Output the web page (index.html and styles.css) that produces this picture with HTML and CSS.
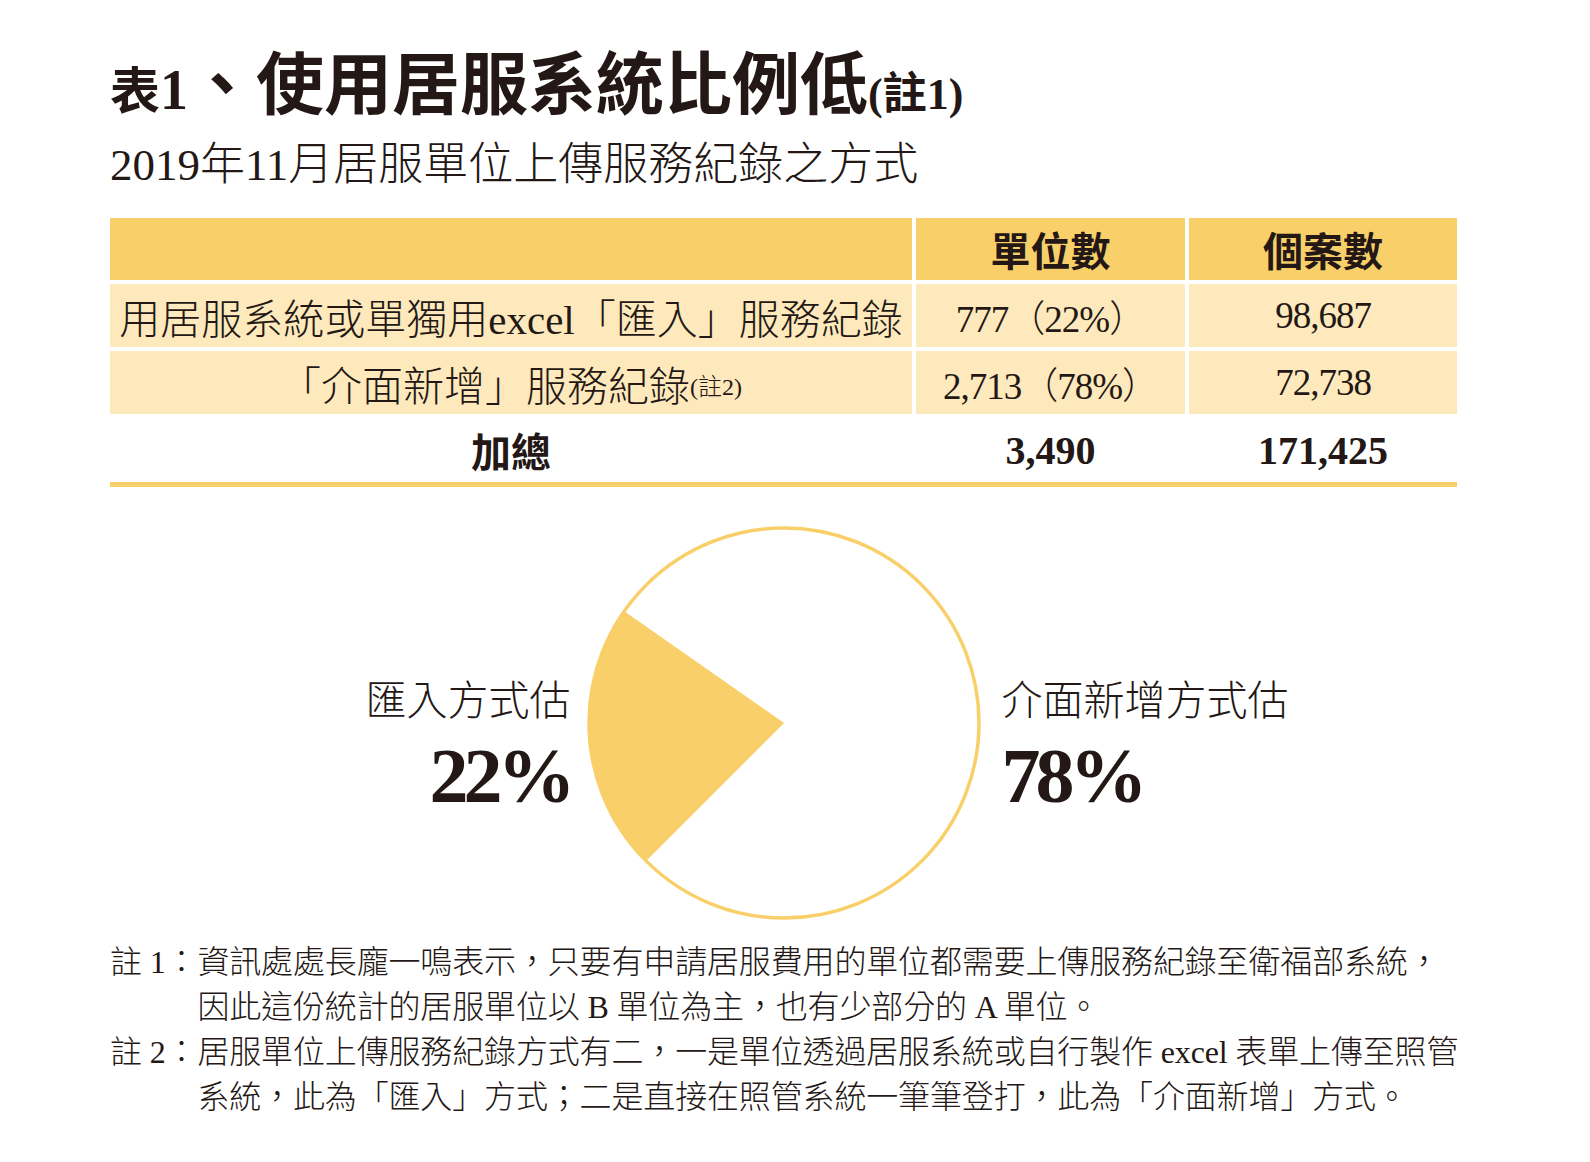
FILE: index.html
```html
<!DOCTYPE html>
<html lang="zh-Hant">
<head>
<meta charset="utf-8">
<title>表1、使用居服系統比例低</title>
<link rel="stylesheet" href="styles.css">
</head>
<body>
<div class="page">
  <h1 class="title"><span class="t-small">表<span class="t-num">1</span></span><span class="t-big">、使用居服系統比例低</span><span class="t-note">(註1)</span></h1>
  <p class="subtitle">2019年11月居服單位上傳服務紀錄之方式</p>

  <div class="data">
    <div class="cell head"></div>
    <div class="cell head">單位數</div>
    <div class="cell head">個案數</div>

    <div class="cell row">用居服系統或單獨用excel「匯入」服務紀錄</div>
    <div class="cell row num">777（22%）</div>
    <div class="cell row num">98,687</div>

    <div class="cell row">「介面新增」服務紀錄<span class="sup-note">(註2)</span></div>
    <div class="cell row num">2,713（78%）</div>
    <div class="cell row num">72,738</div>

    <div class="cell total">加總</div>
    <div class="cell total tnum">3,490</div>
    <div class="cell total tnum">171,425</div>
  </div>

  <div class="chart">
    <div class="label left">
      <div class="label-name">匯入方式估</div>
      <div class="label-pct">22%</div>
    </div>
    <svg class="pie" width="400" height="400" viewBox="0 0 400 400" aria-hidden="true">
      <circle cx="200" cy="200" r="195" fill="#ffffff" stroke="#f9cf69" stroke-width="3.5"/>
      <path d="M200,200 L40.3,88.2 A195,195 0 0,0 62.1,337.9 Z" fill="#f9cf69"/>
    </svg>
    <div class="label right">
      <div class="label-name">介面新增方式估</div>
      <div class="label-pct">78%</div>
    </div>
  </div>

  <div class="notes">
    <div class="note">
      <span class="note-tag">註 1：</span>
      <div class="note-body">
        <span class="note-line">資訊處處長龐一鳴表示，只要有申請居服費用的單位都需要上傳服務紀錄至衛福部系統，</span>
        <span class="note-line">因此這份統計的居服單位以 B 單位為主，也有少部分的 A 單位。</span>
      </div>
    </div>
    <div class="note">
      <span class="note-tag">註 2：</span>
      <div class="note-body">
        <span class="note-line">居服單位上傳服務紀錄方式有二，一是單位透過居服系統或自行製作 excel 表單上傳至照管</span>
        <span class="note-line">系統，此為「匯入」方式；二是直接在照管系統一筆筆登打，此為「介面新增」方式。</span>
      </div>
    </div>
  </div>
</div>
</body>
</html>
```

FILE: styles.css
```css
html, body {
  margin: 0;
  padding: 0;
  background: #ffffff;
}

body {
  color: #231815;
  font-family: "Liberation Serif", "Noto Sans CJK TC", serif;
}

.page {
  width: 1347px;
  padding: 46px 0 0 110px;
}

.title {
  margin: 0;
  font-weight: 700;
  line-height: 80px;
  height: 80px;
  white-space: nowrap;
}

.t-small {
  font-size: 50px;
}

.t-num {
  font-size: 56px;
}

.t-big {
  font-size: 68px;
}

.t-note {
  font-size: 44px;
}

.subtitle {
  margin: 11px 0 0 0;
  font-size: 45px;
  line-height: 56px;
  height: 56px;
  font-weight: 300;
  white-space: nowrap;
}

.data {
  margin-top: 25px;
  display: grid;
  grid-template-columns: 802px 269px 268px;
  grid-template-rows: 62px 63px 63px 64px;
  column-gap: 4px;
  row-gap: 4px;
  border-bottom: 5px solid #f9cf69;
}

.cell {
  display: flex;
  align-items: center;
  justify-content: center;
  white-space: nowrap;
  font-size: 41px;
  font-weight: 300;
}

.head {
  background: #f9cf69;
  font-weight: 700;
  font-size: 40px;
}

.row {
  background: #fee9bc;
}

.num {
  font-size: 37px;
  letter-spacing: -1px;
}

.sup-note {
  font-size: 24px;
  padding-top: 4px;
}

.total {
  background: #ffffff;
  font-weight: 700;
  font-size: 40px;
}

.tnum {
  font-size: 40px;
}

.chart {
  margin-top: 36px;
  display: grid;
  grid-template-columns: 1fr 400px 1fr;
  align-items: center;
}

.pie {
  display: block;
}

.label {
  padding-top: 46px;
}

.label.left {
  justify-self: end;
  text-align: right;
  padding-right: 13px;
}

.label.right {
  justify-self: start;
  text-align: left;
  padding-left: 18px;
}

.label-name {
  font-size: 41px;
  line-height: 50px;
  font-weight: 300;
  white-space: nowrap;
}

.label-pct {
  margin-top: 10px;
  font-size: 78px;
  line-height: 80px;
  font-weight: 700;
  letter-spacing: -5px;
}

.notes {
  margin-top: 17px;
  font-size: 32px;
  line-height: 45px;
  font-weight: 300;
  letter-spacing: -0.15px;
}

.note {
  display: flex;
}

.note-tag {
  flex: 0 0 85px;
  white-space: nowrap;
}

.note-body {
  display: flex;
  flex-direction: column;
}

.note-line {
  display: block;
  white-space: nowrap;
}
```
